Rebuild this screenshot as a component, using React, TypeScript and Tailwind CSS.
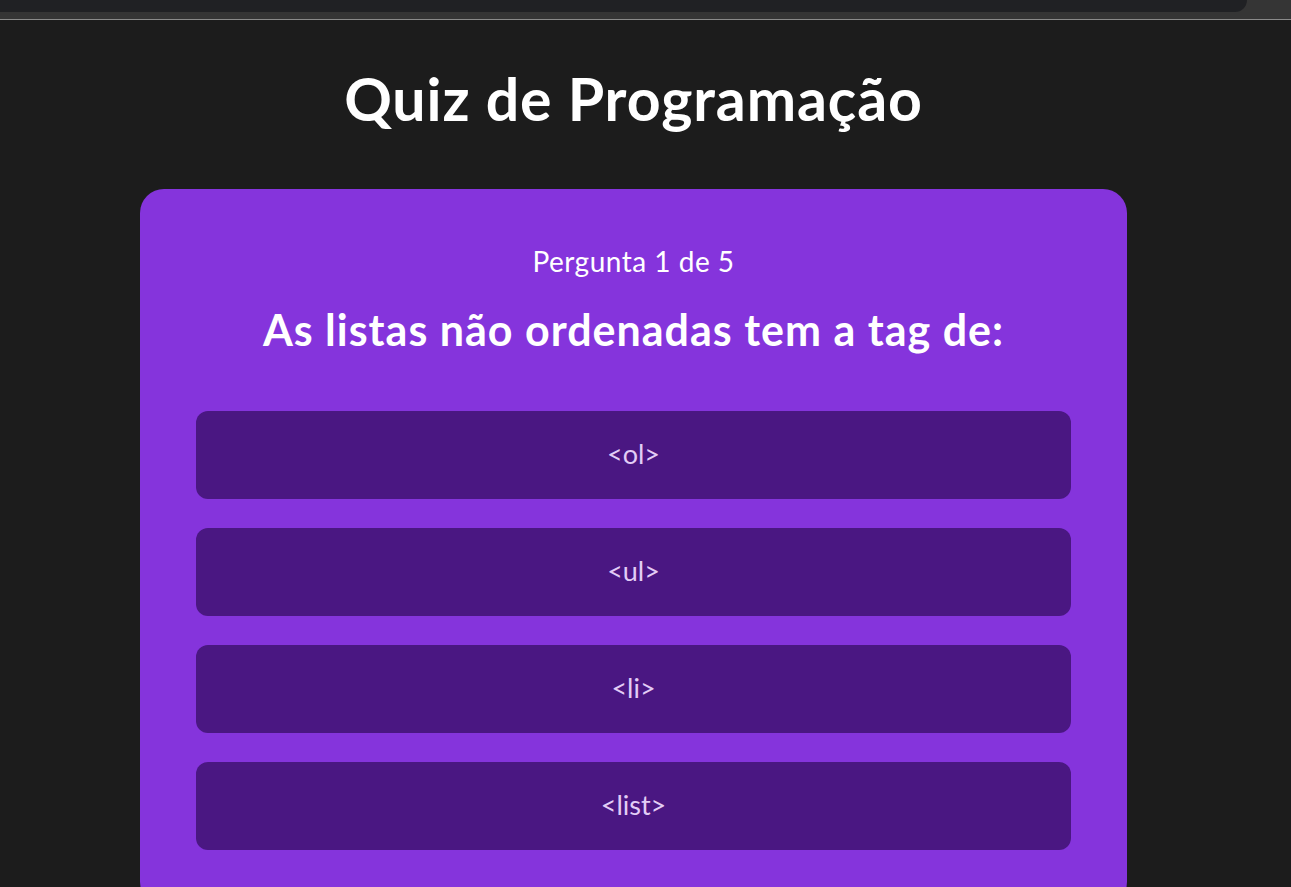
const options = ['<ol>', '<ul>', '<li>', '<list>']

export default function App() {
  return (
    <div className="min-h-screen bg-[#1c1c1c] font-['Lato','Noto_Sans',sans-serif]">
      <div className="h-[19px] bg-[#353535] border-b border-[#8a8a8a] box-content">
        <div className="h-3 w-[1247px] bg-[#202124] rounded-br-[12px]" />
      </div>
      <div className="flex flex-col items-center pr-6">
        <h1 className="mt-[42px] text-[59px] font-bold tracking-[0.9px] text-white leading-tight">
          Quiz de Programação
        </h1>
        <div className="mt-[53px] w-[987px] rounded-[24px] bg-[#8534dc] px-14 pt-[55px] pb-14">
          <p className="text-center text-[28px] tracking-[0.5px] text-white leading-tight">Pergunta 1 de 5</p>
          <h2 className="mt-[24px] text-center text-[43px] font-bold tracking-[1px] text-white leading-tight">
            As listas não ordenadas tem a tag de:
          </h2>
          <div className="mt-[54px] flex flex-col gap-[29px]">
            {options.map((o) => (
              <button
                key={o}
                className="h-[88px] w-full rounded-[12px] bg-[#4a1782] text-[27px] text-[#e2cdf6]"
              >
                {o}
              </button>
            ))}
          </div>
        </div>
      </div>
    </div>
  )
}
